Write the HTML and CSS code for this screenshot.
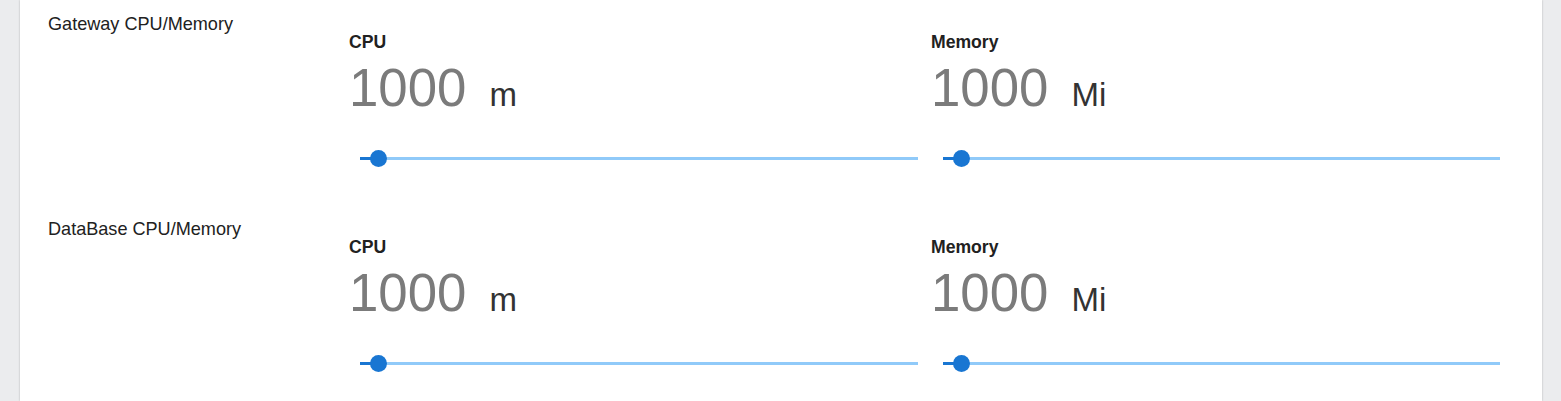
FILE: index.html
```html
<!DOCTYPE html>
<html lang="en">
<head>
    <meta charset="UTF-8">
    <meta name="viewport" content="width=device-width, initial-scale=1.0">
    <title>Resources</title>
    <link rel="stylesheet" href="styles.css">
</head>
<body>
    <div class="card">
        <div class="row">
            <div class="row-label">Gateway CPU/Memory</div>
            <div class="field">
                <div class="field-title">CPU</div>
                <div class="field-value"><span class="num">1000</span><span class="unit">m</span></div>
                <div class="slider">
                    <div class="track"></div>
                    <div class="fill"></div>
                    <div class="thumb"></div>
                </div>
            </div>
            <div class="field">
                <div class="field-title">Memory</div>
                <div class="field-value"><span class="num">1000</span><span class="unit">Mi</span></div>
                <div class="slider">
                    <div class="track"></div>
                    <div class="fill"></div>
                    <div class="thumb"></div>
                </div>
            </div>
        </div>
        <div class="row">
            <div class="row-label">DataBase CPU/Memory</div>
            <div class="field">
                <div class="field-title">CPU</div>
                <div class="field-value"><span class="num">1000</span><span class="unit">m</span></div>
                <div class="slider">
                    <div class="track"></div>
                    <div class="fill"></div>
                    <div class="thumb"></div>
                </div>
            </div>
            <div class="field">
                <div class="field-title">Memory</div>
                <div class="field-value"><span class="num">1000</span><span class="unit">Mi</span></div>
                <div class="slider">
                    <div class="track"></div>
                    <div class="fill"></div>
                    <div class="thumb"></div>
                </div>
            </div>
        </div>
    </div>
</body>
</html>
```

FILE: styles.css
```css
body {
    margin: 0;
    background-color: #ebecee;
    font-family: "Liberation Sans", Arial, sans-serif;
}
.card {
    margin-left: 20px;
    width: 1522px;
    height: 401px;
    background-color: #fff;
    box-shadow: 0 0 2px rgba(0, 0, 0, 0.25);
    overflow: hidden;
}
.row {
    display: grid;
    grid-template-columns: 301px 1fr 1fr;
    height: 205px;
    box-sizing: border-box;
    padding: 14px 29px 0 28px;
}
.row-label {
    font-size: 18.1px;
    line-height: 20px;
    color: #212121;
}
.field {
    padding-top: 18px;
}
.field-title {
    font-size: 17.6px;
    font-weight: bold;
    line-height: 20px;
    color: #212121;
}
.field-value {
    display: flex;
    align-items: baseline;
    margin-top: 10px;
}
.num {
    font-size: 52.8px;
    line-height: 1;
    color: #7b7b7b;
}
.unit {
    margin-left: 23px;
    font-size: 33px;
    color: #333;
}
.slider {
    position: relative;
    height: 20px;
    margin: 34px 13px 0 11px;
}
.field + .field .slider {
    margin-left: 12px;
}
.track {
    position: absolute;
    left: 0;
    right: 0;
    top: 8px;
    height: 3px;
    background-color: #90caf9;
}
.fill {
    position: absolute;
    left: 0;
    width: 18px;
    top: 8px;
    height: 3px;
    background-color: #1976d2;
}
.thumb {
    position: absolute;
    left: 10px;
    top: 1px;
    width: 17px;
    height: 17px;
    border-radius: 50%;
    background-color: #1976d2;
}
```
